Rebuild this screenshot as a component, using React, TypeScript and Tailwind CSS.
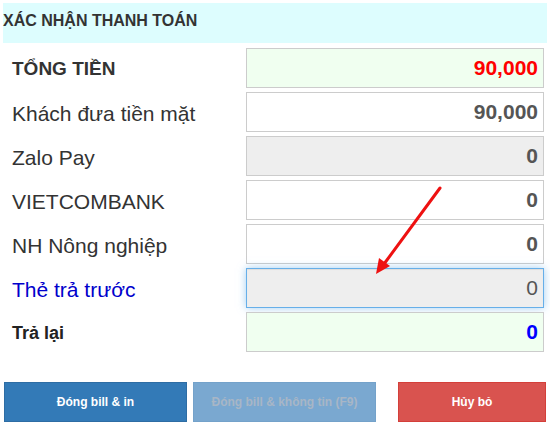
import React from "react";

type Row = {
  label: string;
  value: string;
  labelCls: string;
  boxCls: string;
  valueCls: string;
};

const rows: Row[] = [
  {
    label: "TỔNG TIỀN",
    value: "90,000",
    labelCls: "text-[19px] font-bold text-[#333] pl-[2px]",
    boxCls: "bg-[#f0fff0] border-[#cccccc]",
    valueCls: "font-bold text-[#ff0000]",
  },
  {
    label: "Khách đưa tiền mặt",
    value: "90,000",
    labelCls: "text-[21px] text-[#333]",
    boxCls: "bg-white border-[#cccccc]",
    valueCls: "font-bold text-[#555]",
  },
  {
    label: "Zalo Pay",
    value: "0",
    labelCls: "text-[21px] text-[#333]",
    boxCls: "bg-[#eeeeee] border-[#cccccc]",
    valueCls: "font-bold text-[#555]",
  },
  {
    label: "VIETCOMBANK",
    value: "0",
    labelCls: "text-[21px] text-[#333]",
    boxCls: "bg-white border-[#cccccc]",
    valueCls: "font-bold text-[#555]",
  },
  {
    label: "NH Nông nghiệp",
    value: "0",
    labelCls: "text-[21px] text-[#333]",
    boxCls: "bg-white border-[#cccccc]",
    valueCls: "font-bold text-[#555]",
  },
  {
    label: "Thẻ trả trước",
    value: "0",
    labelCls: "text-[21px] text-[#0000cc]",
    boxCls:
      "bg-[#eeeeee] border-[#66afe9] shadow-[inset_0_1px_1px_rgba(0,0,0,0.075),0_0_8px_rgba(102,175,233,0.6)]",
    valueCls: "font-normal text-[#555]",
  },
  {
    label: "Trả lại",
    value: "0",
    labelCls: "text-[18px] font-bold text-[#222] pl-[2px]",
    boxCls: "bg-[#f0fff0] border-[#cccccc]",
    valueCls: "font-bold text-[#0000ff]",
  },
];

export default function App() {
  return (
    <div
      className="relative w-[550px] h-[425px] bg-white overflow-hidden"
      style={{ fontFamily: '"Liberation Sans", Arial, sans-serif' }}
    >
      <div className="mx-[3px] mt-[3px] h-[40px] bg-[#ddfdfe] flex items-center pb-[5px]">
        <span className="text-[16px] font-bold text-[#333]">XÁC NHẬN THANH TOÁN</span>
      </div>

      <div className="mt-[5px] flex flex-col gap-[4px]">
        {rows.map((r) => (
          <div key={r.label} className="flex items-center h-[40px]">
            <div className={`w-[246px] pl-[12px] pt-[3px] ${r.labelCls}`}>{r.label}</div>
            <div
              className={`w-[298px] h-[40px] border flex items-center justify-end pr-[5px] text-[21px] ${r.boxCls}`}
            >
              <span className={r.valueCls}>{r.value}</span>
            </div>
          </div>
        ))}
      </div>

      <div className="mt-[30px] flex pl-[4px]">
        <button
          className="w-[183px] h-[40px] bg-[#337ab7] border border-[#2e6da4] text-white text-[12px] font-bold"
          style={{ fontFamily: '"Liberation Sans", Arial, sans-serif' }}
        >
          Đóng bill &amp; in
        </button>
        <button
          className="ml-[6px] w-[183px] h-[40px] bg-[#7aa8d0] border border-[#74a2ca] text-[#a8b6c6] text-[12px] font-bold"
          style={{ fontFamily: '"Liberation Sans", Arial, sans-serif' }}
        >
          Đóng bill &amp; không tin (F9)
        </button>
        <button
          className="ml-[22px] w-[148px] h-[40px] bg-[#d9534f] border border-[#d43f3a] text-white text-[12px] font-bold"
          style={{ fontFamily: '"Liberation Sans", Arial, sans-serif' }}
        >
          Hủy bỏ
        </button>
      </div>

      <svg
        className="absolute left-0 top-0 pointer-events-none"
        width="550"
        height="425"
        viewBox="0 0 550 425"
      >
        <line x1="440" y1="188" x2="384" y2="264" stroke="#ee1111" strokeWidth="3" strokeLinecap="round" />
        <polygon points="376,274 379,258 390,266" fill="#ee1111" />
      </svg>
    </div>
  );
}
